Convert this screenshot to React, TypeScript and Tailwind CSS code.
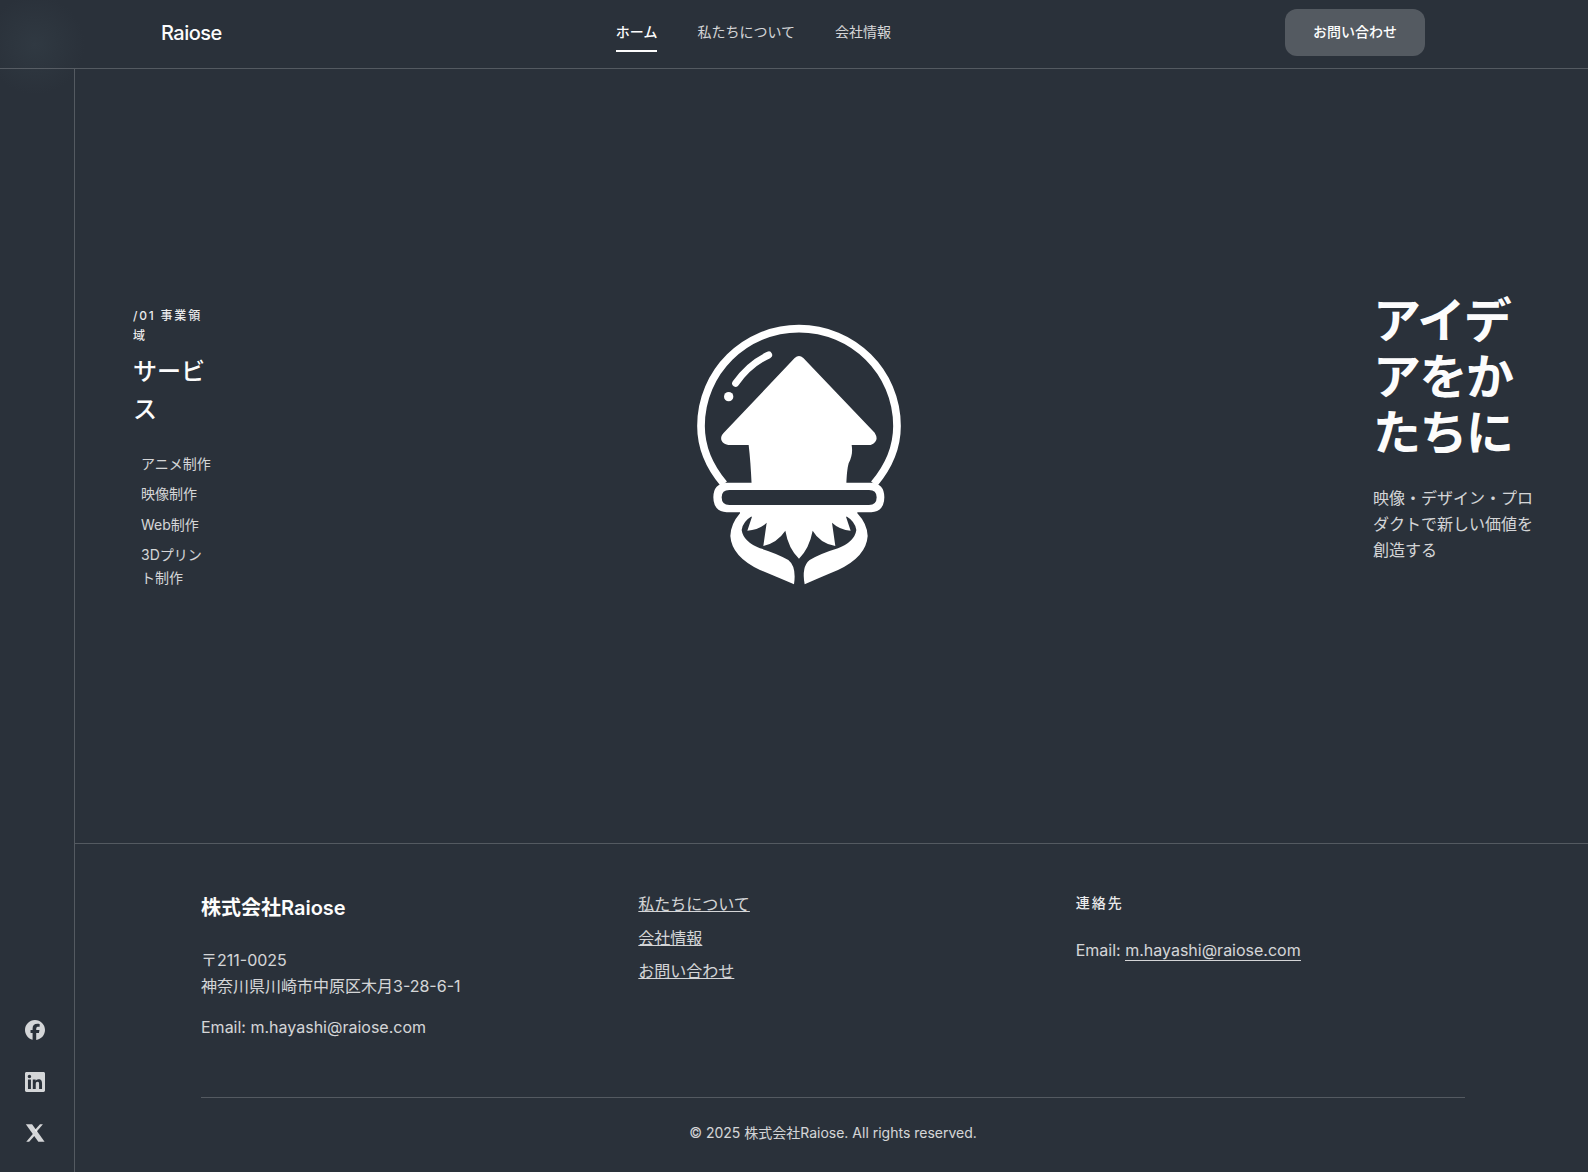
import { FaFacebook } from 'react-icons/fa6';
import { SiLinkedin } from 'react-icons/si';

function XIcon() {
  return (
    <svg viewBox="0 0 24 24" className="h-5 w-5" fill="currentColor">
      <path d="M1 1.5H8.5L23.5 22.5H16Z" />
      <path d="M18 1.5H21.5L13.6 10.8L11.8 8.4Z" />
      <path d="M9.6 12.8L11.5 15.3L5 22.5H1.5Z" />
    </svg>
  );
}

function Logo() {
  return (
    <svg viewBox="0 0 840 900" className="h-[300px] w-[280px]" fill="#fff">
      <path
        d="M192 552 C148 500 123 440 123 378 C123 216 255 86 417 86 C579 86 711 216 711 378 C711 440 686 500 642 552"
        fill="none"
        stroke="#fff"
        strokeWidth="23"
      />
      <path d="M227 250 C252 214 285 184 326 165" fill="none" stroke="#fff" strokeWidth="21" strokeLinecap="round" />
      <circle cx="206" cy="290" r="14" />
      <path d="M404 174 Q417 162 430 174 L644 398 Q660 424 632 435 L575 435 C578 455 576 470 566 490 C562 505 560 525 559 556 L275 556 C273 510 270 470 266 435 L205 435 C182 432 178 412 190 400 Z" />
      <path
        fillRule="evenodd"
        d="M200 548 H634 Q673 550 673 592 Q673 634 634 637 H200 Q160 634 160 592 Q160 550 200 548 Z M208 570 Q185 570 185 592 Q185 615 208 615 H627 Q650 615 650 592 Q650 570 627 570 Z"
      />
      <path d="M250 630 H585 V640 L558 650 L572 692 Q540 690 516 668 L526 738 Q480 730 458 692 Q448 745 417 776 Q385 745 376 692 Q352 728 310 738 L320 668 Q298 690 262 692 L276 650 L250 640 Z" />
      <path d="M240 630 V640 Q212 672 211 708 Q215 770 300 810 Q360 835 402 853 Q410 800 385 780 Q350 760 300 745 Q250 725 245 690 Q248 665 276 648 L276 630 Z" />
      <path d="M592 630 V640 Q622 672 623 708 Q619 770 534 810 Q474 835 434 853 Q424 800 449 780 Q484 760 534 745 Q584 725 589 690 Q586 665 558 648 L558 630 Z" />
    </svg>
  );
}

export default function App() {
  return (
    <div
      className="relative flex h-[1172px] w-full flex-col overflow-hidden bg-[#2a313a] text-white"
      style={{ fontFamily: 'Inter, "Noto Sans CJK JP", sans-serif' }}
    >
      <div className="absolute left-[-15px] top-[-5px] h-[100px] w-[100px] rounded-full bg-[radial-gradient(circle,#303942_0%,#2a313a_70%)]" />
      <header className="relative flex h-[69px] shrink-0 items-center justify-between border-b border-white/20 pb-[3px] pl-[161px] pr-[163px]">
        <a className="text-[20px] font-medium tracking-tight opacity-[0.99]">Raiose</a>
        <nav className="flex items-center gap-[40px] pb-[2px] text-sm">
          <a className="relative font-medium opacity-[0.99]">
            ホーム
            <span className="absolute bottom-[-10px] left-0 h-[2px] w-full bg-white" />
          </a>
          <a className="opacity-80">私たちについて</a>
          <a className="opacity-80">会社情報</a>
        </nav>
        <button className="h-[47px] w-[140px] rounded-xl bg-white/20 pb-[1px] text-sm font-medium">
          <span className="opacity-[0.99]">お問い合わせ</span>
        </button>
      </header>

      <div className="relative flex min-h-0 flex-1">
        <aside className="flex w-[75px] shrink-0 flex-col items-center justify-end gap-[31px] border-r border-white/20 pb-[29px] pr-[4px] text-white/80">
          <FaFacebook size={20} className="mb-[1px]" />
          <SiLinkedin size={20} />
          <XIcon />
        </aside>

        <div className="flex min-w-0 flex-1 flex-col">
          <main className="flex h-[775px] shrink-0 items-center border-b border-white/20">
            <section className="mb-[17px] ml-[58px] w-[80px]">
              <p className="text-xs font-medium leading-[20px] tracking-[0.15em] opacity-90">/01 事業領域</p>
              <h2 className="mt-[7px] text-2xl font-medium leading-[38.4px] opacity-[0.99]">サービス</h2>
              <ul className="mt-[23px] space-y-2 pl-2 text-sm leading-[22.4px] opacity-80">
                <li>アニメ制作</li>
                <li>映像制作</li>
                <li>Web制作</li>
                <li>3Dプリント制作</li>
              </ul>
            </section>
            <div className="mb-[12px] ml-[447px] shrink-0">
              <Logo />
            </div>
            <section className="mb-[57px] ml-[433px] w-[170px]">
              <h1 className="text-5xl font-bold leading-[56px] tracking-[-0.03em] opacity-[0.99]">アイデアをかたちに</h1>
              <p className="mt-[24px] text-base leading-[26px] opacity-80">映像・デザイン・プロダクトで新しい価値を創造する</p>
            </section>
          </main>

          <footer className="flex-1 pl-[126px] pr-[123px] pt-[48px]">
            <div className="grid h-[206px] grid-cols-3 gap-12 border-b border-white/20">
              <div>
                <h3 className="pt-[1px] text-xl font-semibold leading-[30px] opacity-[0.99]">株式会社Raiose</h3>
                <p className="mt-[24px] text-base leading-[26px] opacity-80">
                  〒211-0025
                  <br />
                  神奈川県川崎市中原区木月3-28-6-1
                </p>
                <p className="mt-[15px] text-base leading-[26px] opacity-80">Email: m.hayashi@raiose.com</p>
              </div>
              <ul className="space-y-2 text-base leading-[25.6px] opacity-80">
                <li><a className="underline">私たちについて</a></li>
                <li><a className="underline">会社情報</a></li>
                <li><a className="underline">お問い合わせ</a></li>
              </ul>
              <div>
                <h4 className="pt-[1px] text-sm font-medium leading-[20px] tracking-[0.15em] opacity-90">連絡先</h4>
                <p className="mt-[24px] text-base leading-[26px] opacity-80">
                  Email: <a className="border-b border-white">m.hayashi@raiose.com</a>
                </p>
              </div>
            </div>
            <p className="pt-[25px] text-center text-sm leading-[20px] opacity-80">© 2025 株式会社Raiose. All rights reserved.</p>
          </footer>
        </div>
      </div>
    </div>
  );
}
